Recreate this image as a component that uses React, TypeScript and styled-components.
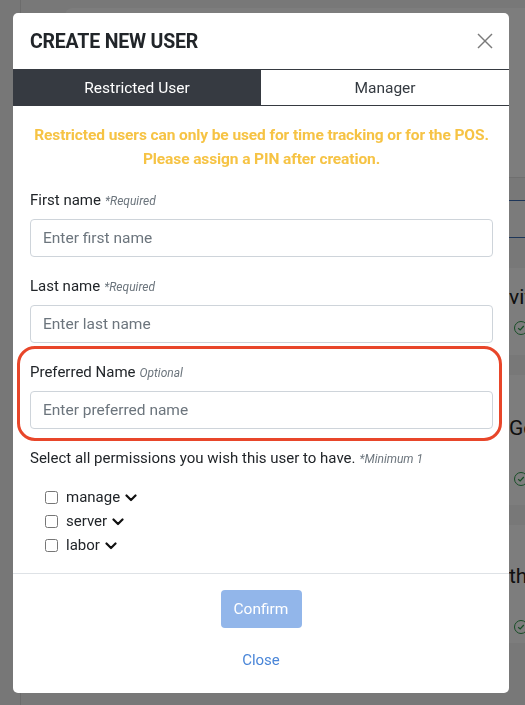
import React from "react";
import styled, { createGlobalStyle } from "styled-components";

const Global = createGlobalStyle`
  html, body { margin: 0; padding: 0; }
  body {
    font-family: Roboto, "Liberation Sans", Arial, sans-serif;
    background: #ffffff;
    overflow: hidden;
  }
  * { box-sizing: border-box; }
`;

/* ---------- background page ---------- */
const Page = styled.div`
  display: flex;
  width: 525px;
  height: 705px;
  background: #ffffff;
  overflow: hidden;
`;

const Sidebar = styled.div`
  flex: 0 0 21px;
  border-right: 1px solid #dcdcdc;
  background: #f2f2f2;
`;

const Main = styled.div`
  flex: 1;
  min-width: 0;
  display: flex;
  flex-direction: column;
  padding-top: 8px;
  background: #f4f4f4;
`;

const TopCard = styled.div`
  margin-left: 44px;
  height: 170px;
  border-radius: 8px 0 0 0;
  background: #ffffff;
  border-bottom: 1px solid #e2e2e2;
`;

const TableHead = styled.div`
  height: 38px;
  margin-top: 22px;
  border-top: 1px solid #3d6fb6;
  border-bottom: 1px solid #3d6fb6;
  background: #fafafa;
`;

const List = styled.div`
  display: flex;
  flex-direction: column;
  gap: 20px;
  margin-top: 30px;
`;

const Row = styled.div<{ $h: number; $pad: number; $gap: number }>`
  height: ${(p) => p.$h}px;
  background: #ffffff;
  padding: ${(p) => p.$pad}px 0 0 488px;
  display: flex;
  flex-direction: column;
  gap: ${(p) => p.$gap}px;
`;

const Name = styled.div`
  font-size: 21px;
  line-height: 24px;
  color: #222;
  white-space: nowrap;
`;

const Check = styled.div`
  margin-left: 5px;
  width: 14px;
  height: 14px;
  border-radius: 50%;
  border: 1.5px solid #2e9d4c;
  display: flex;
  align-items: center;
  justify-content: center;
`;

/* ---------- modal ---------- */
const Overlay = styled.div`
  position: fixed;
  inset: 0;
  background: rgba(0, 0, 0, 0.51);
  padding: 13px 16px 0 13px;
`;

const Modal = styled.div`
  width: 496px;
  background: #ffffff;
  border-radius: 5px;
  overflow: hidden;
  display: flex;
  flex-direction: column;
`;

const Header = styled.div`
  height: 56px;
  display: flex;
  align-items: center;
  justify-content: space-between;
  padding: 0 15px 0 17px;
`;

const Title = styled.h2`
  margin: 0;
  font-size: 19.5px;
  font-weight: 700;
  color: #212529;
  letter-spacing: -0.2px;
`;

const CloseX = styled.button`
  border: 0;
  background: none;
  padding: 0;
  width: 18px;
  height: 18px;
  display: flex;
  align-items: center;
  justify-content: center;
  cursor: pointer;
`;

const Tabs = styled.div`
  display: flex;
  height: 37px;
`;

const Tab = styled.div<{ $active?: boolean }>`
  flex: 1;
  display: flex;
  align-items: center;
  justify-content: center;
  font-size: 15.5px;
  color: ${(p) => (p.$active ? "#ffffff" : "#343a40")};
  background: ${(p) => (p.$active ? "#363a41" : "#ffffff")};
  border-top: 1px solid #363a41;
  border-bottom: 1px solid #363a41;
`;

const Body = styled.div`
  padding: 17px 16px 16px 17px;
  display: flex;
  flex-direction: column;
`;

const Warning = styled.p`
  margin: 0;
  text-align: center;
  font-size: 15.5px;
  font-weight: 700;
  line-height: 24px;
  color: #f6c344;
  letter-spacing: -0.1px;
`;

const Field = styled.div`
  position: relative;
  margin-top: 19px;
  display: flex;
  flex-direction: column;
  gap: 9px;
`;

const Label = styled.label`
  display: block;
  height: 20px;
  font-size: 15px;
  line-height: 20px;
  color: #212529;
`;

const Hint = styled.span`
  margin-left: 4px;
  font-size: 12px;
  line-height: 1;
  font-style: italic;
  color: #6c757d;
`;

const Input = styled.input`
  height: 38px;
  width: 100%;
  border: 1px solid #ced4da;
  border-radius: 4px;
  padding: 0 12px;
  font-family: inherit;
  font-size: 15.5px;
  color: #495057;
  &::placeholder { color: #6c757d; }
`;

const Highlight = styled.div`
  position: absolute;
  top: -16px;
  bottom: -12px;
  left: -13px;
  right: -9px;
  border: 3px solid #e8462a;
  border-radius: 18px;
  pointer-events: none;
`;

const Instruction = styled.div`
  margin-top: 19px;
  height: 20px;
  font-size: 15px;
  line-height: 20px;
  color: #212529;
`;

const Perms = styled.div`
  margin-top: 17px;
  padding-left: 15px;
  display: flex;
  flex-direction: column;
`;

const Perm = styled.label`
  height: 24px;
  display: flex;
  align-items: center;
  font-size: 15px;
  color: #212529;
`;

const Box = styled.input`
  width: 13px;
  height: 13px;
  margin: 0 8px 0 0;
`;

const Chevron = styled.svg`
  margin-left: 5px;
  margin-top: 1px;
`;

const Footer = styled.div`
  border-top: 1px solid #dee2e6;
  padding: 16px 0 23px;
  display: flex;
  flex-direction: column;
  align-items: center;
`;

const Confirm = styled.button`
  height: 38px;
  width: 81px;
  border: 0;
  border-radius: 4px;
  background: #92b6ea;
  color: #ffffff;
  font-family: inherit;
  font-size: 15.5px;
`;

const CloseLink = styled.button`
  margin-top: 22px;
  border: 0;
  background: none;
  padding: 0;
  height: 20px;
  line-height: 20px;
  font-family: inherit;
  font-size: 15px;
  color: #4a86d8;
`;

const rows = [
  { name: "vivian", h: 87, pad: 17, gap: 12 },
  { name: "Gomez", h: 130, pad: 41, gap: 32 },
  { name: "thomas", h: 118, pad: 39, gap: 32 },
];

const perms = ["manage", "server", "labor"];

const fields = [
  { label: "First name", hint: "*Required", ph: "Enter first name" },
  { label: "Last name", hint: "*Required", ph: "Enter last name" },
];

export default function App() {
  return (
    <>
      <Global />
      <Page>
        <Sidebar />
        <Main>
          <TopCard />
          <TableHead />
          <List>
            {rows.map((r) => (
              <Row key={r.name} $h={r.h} $pad={r.pad} $gap={r.gap}>
                <Name>{r.name}</Name>
                <Check>
                  <svg width="8" height="8" viewBox="0 0 8 8">
                    <polyline points="1.2,4.2 3.2,6 6.8,2" fill="none" stroke="#2e9d4c" strokeWidth="1.2" />
                  </svg>
                </Check>
              </Row>
            ))}
          </List>
        </Main>
      </Page>
      <Overlay>
        <Modal>
          <Header>
            <Title>CREATE NEW USER</Title>
            <CloseX aria-label="Close">
              <svg width="16" height="16" viewBox="0 0 16 16">
                <line x1="1" y1="1" x2="15" y2="15" stroke="#7a7a7a" strokeWidth="1.4" />
                <line x1="15" y1="1" x2="1" y2="15" stroke="#7a7a7a" strokeWidth="1.4" />
              </svg>
            </CloseX>
          </Header>
          <Tabs>
            <Tab $active>Restricted User</Tab>
            <Tab>Manager</Tab>
          </Tabs>
          <Body>
            <Warning>
              Restricted users can only be used for time tracking or for the POS.
              <br />
              Please assign a PIN after creation.
            </Warning>
            {fields.map((f) => (
              <Field key={f.label}>
                <Label>
                  {f.label}
                  <Hint>{f.hint}</Hint>
                </Label>
                <Input placeholder={f.ph} />
              </Field>
            ))}
            <Field>
              <Label>
                Preferred Name<Hint>Optional</Hint>
              </Label>
              <Input placeholder="Enter preferred name" />
              <Highlight />
            </Field>
            <Instruction>
              Select all permissions you wish this user to have.
              <Hint>*Minimum 1</Hint>
            </Instruction>
            <Perms>
              {perms.map((p) => (
                <Perm key={p}>
                  <Box type="checkbox" />
                  {p}
                  <Chevron width="12" height="8" viewBox="0 0 12 8">
                    <polyline points="1.5,1.5 6,6 10.5,1.5" fill="none" stroke="#111" strokeWidth="2.2" strokeLinecap="round" strokeLinejoin="round" />
                  </Chevron>
                </Perm>
              ))}
            </Perms>
          </Body>
          <Footer>
            <Confirm>Confirm</Confirm>
            <CloseLink>Close</CloseLink>
          </Footer>
        </Modal>
      </Overlay>
    </>
  );
}
